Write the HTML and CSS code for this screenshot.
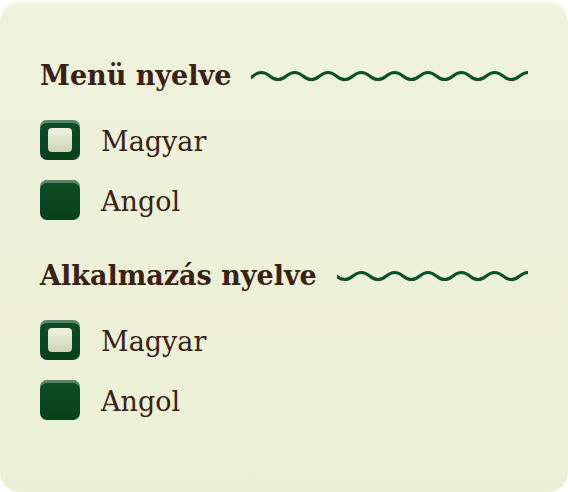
FILE: index.html
```html
<!DOCTYPE html>
<html lang="hu">
<head>
<meta charset="utf-8">
<title>Nyelv</title>
<link rel="stylesheet" href="styles.css">
</head>
<body>
<div class="card">
  <section class="group">
    <div class="head">
      <h2 class="title">Menü nyelve</h2>
      <div class="wave"><svg width="400" height="14" viewBox="0 0 400 14"><path d="M -8.333 7 q 8.333 -7 16.667 0 t 16.667 0 t 16.667 0 t 16.667 0 t 16.667 0 t 16.667 0 t 16.667 0 t 16.667 0 t 16.667 0 t 16.667 0 t 16.667 0 t 16.667 0 t 16.667 0 t 16.667 0 t 16.667 0 t 16.667 0 t 16.667 0 t 16.667 0 t 16.667 0 t 16.667 0 t 16.667 0 t 16.667 0 t 16.667 0 t 16.667 0 t 16.667 0" fill="none" stroke="#0c5027" stroke-width="3" stroke-linecap="round"/></svg></div>
    </div>
    <label class="option"><span class="box checked"><span class="mark"></span></span><span class="label">Magyar</span></label>
    <label class="option"><span class="box"></span><span class="label">Angol</span></label>
  </section>
  <section class="group">
    <div class="head">
      <h2 class="title">Alkalmazás nyelve</h2>
      <div class="wave"><svg width="400" height="14" viewBox="0 0 400 14"><path d="M -8.333 7 q 8.333 -7 16.667 0 t 16.667 0 t 16.667 0 t 16.667 0 t 16.667 0 t 16.667 0 t 16.667 0 t 16.667 0 t 16.667 0 t 16.667 0 t 16.667 0 t 16.667 0 t 16.667 0 t 16.667 0 t 16.667 0 t 16.667 0 t 16.667 0 t 16.667 0 t 16.667 0 t 16.667 0 t 16.667 0 t 16.667 0 t 16.667 0 t 16.667 0 t 16.667 0" fill="none" stroke="#0c5027" stroke-width="3" stroke-linecap="round"/></svg></div>
    </div>
    <label class="option"><span class="box checked"><span class="mark"></span></span><span class="label">Magyar</span></label>
    <label class="option"><span class="box"></span><span class="label">Angol</span></label>
  </section>
</div>
</body>
</html>
```
FILE: styles.css
```css
html, body {
  margin: 0;
  padding: 0;
  background: #ffffff;
}
.card {
  box-sizing: border-box;
  width: 568px;
  height: 492px;
  border-radius: 20px;
  background: linear-gradient(#eff2dd, #ecf0d4);
  box-shadow: inset 0 3px 0 rgba(255, 255, 255, 0.55);
  padding: 61px 40px 0 40px;
  display: flex;
  flex-direction: column;
  gap: 41px;
  font-family: "DejaVu Serif", "Liberation Serif", serif;
  color: #3a2015;
}
.group {
  display: flex;
  flex-direction: column;
  gap: 20px;
}
.head {
  display: flex;
  align-items: center;
  gap: 20px;
  margin-bottom: 9px;
}
.title {
  margin: 0;
  font-size: 27px;
  line-height: 30px;
  font-weight: bold;
  white-space: nowrap;
}
.wave {
  flex: 1;
  overflow: hidden;
  display: flex;
  justify-content: flex-end;
  height: 14px;
}
.wave svg {
  flex: none;
  display: block;
}
.option {
  display: flex;
  align-items: center;
  gap: 21px;
  height: 40px;
}
.box {
  box-sizing: border-box;
  width: 40px;
  height: 40px;
  border-radius: 7px;
  background: linear-gradient(#0e4e27, #07401c);
  box-shadow: inset 0 3px 0 rgba(180, 200, 190, 0.45);
  display: flex;
  align-items: center;
  justify-content: center;
  flex: none;
}
.mark {
  width: 24px;
  height: 24px;
  border-radius: 4px;
  background: linear-gradient(#eff1e1, #cbd5b6);
}
.label {
  font-size: 27px;
  line-height: 30px;
  padding-top: 4px;
}
```
